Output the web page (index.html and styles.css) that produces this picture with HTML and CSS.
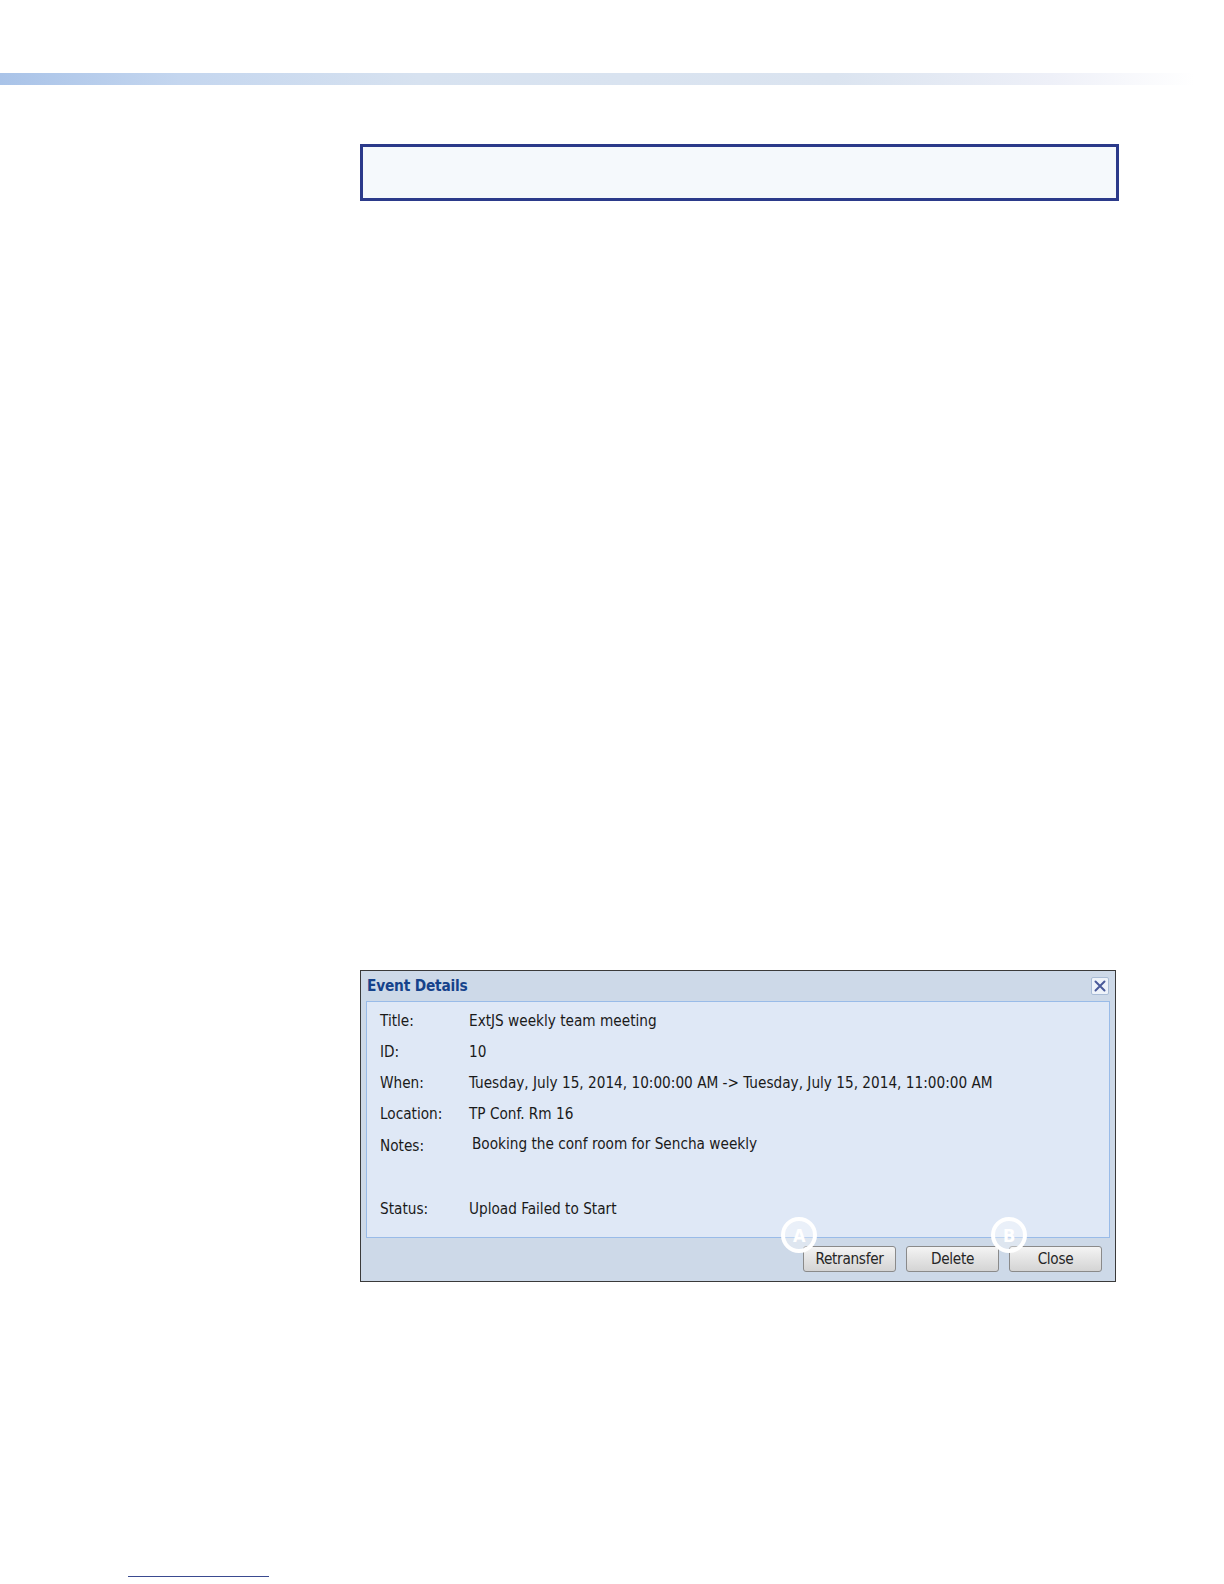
FILE: index.html
```html
<!DOCTYPE html>
<html>
<head>
<meta charset="utf-8">
<link rel="stylesheet" href="styles.css">
</head>
<body>
<div class="page">
<div class="topbar"></div>
<div class="content">
  <div class="notebox"></div>
  <div class="dialog">
    <div class="dlg-head">
      <span class="dlg-title">Event Details</span>
      <span class="dlg-close">
        <svg width="12" height="12" viewBox="0 0 12 12"><path d="M1.5 1.5 L10.5 10.5 M10.5 1.5 L1.5 10.5" stroke="#4a5a9a" stroke-width="2" stroke-linecap="round"/></svg>
      </span>
    </div>
    <div class="dlg-body">
      <div class="row"><span class="lbl">Title:</span><span class="val">ExtJS weekly team meeting</span></div>
      <div class="row r2"><span class="lbl">ID:</span><span class="val">10</span></div>
      <div class="row"><span class="lbl">When:</span><span class="val">Tuesday, July 15, 2014, 10:00:00 AM -&gt; Tuesday, July 15, 2014, 11:00:00 AM</span></div>
      <div class="row"><span class="lbl">Location:</span><span class="val">TP Conf. Rm 16</span></div>
      <div class="row notes"><span class="lbl low">Notes:</span><span class="val shift">Booking the conf room for Sencha weekly</span></div>
      <div class="row"><span class="lbl">Status:</span><span class="val">Upload Failed to Start</span></div>
    </div>
    <div class="dlg-foot">
      <span class="btn">Retransfer<span class="callout ca">A</span></span>
      <span class="btn">Delete</span>
      <span class="btn">Close<span class="callout cb">B</span></span>
    </div>
  </div>
  <div class="footline"></div>
</div>
</div>
</body>
</html>
```
FILE: styles.css
```css
html, body { margin: 0; padding: 0; background: #ffffff; }
body { font-family: "DejaVu Sans", sans-serif; }
.page { width: 1224px; height: 1584px; padding-top: 73px; box-sizing: border-box; overflow: hidden; }
.topbar {
  width: 1194px;
  height: 12px;
  background: linear-gradient(to right, #a9c3e8 0%, #c4d6ef 15%, #d7e2f0 35%, #dbe4f0 70%, #eef0f8 88%, #ffffff 100%);
}
.content { padding-left: 360px; }
.notebox {
  margin-top: 59px;
  width: 753px;
  height: 51px;
  border: 3px solid #2b3a8a;
  background: #f5f9fc;
}
.dialog {
  margin-top: 769px;
  width: 754px;
  height: 310px;
  border: 1px solid #3a3a3a;
  background: #cdd9e8;
  display: flex;
  flex-direction: column;
  font-family: "DejaVu Sans Condensed", "DejaVu Sans", sans-serif;
}
.dlg-head {
  height: 30px;
  flex: none;
  display: flex;
  align-items: center;
  justify-content: space-between;
  padding: 0 6px 0 6px;
}
.dlg-title { color: #15428b; font-weight: bold; font-size: 15.3px; letter-spacing: -0.2px; }
.dlg-close {
  width: 16px; height: 16px;
  border: 1px solid #a9bcd6;
  background: #eef3fa;
  border-radius: 2px;
  display: flex; align-items: center; justify-content: center;
}
.dlg-body {
  flex: none;
  margin: 0 5px 0 5px;
  height: 237px;
  border: 1px solid #99bbe8;
  background: #dfe8f6;
  padding: 4px 0 0 13px;
  box-sizing: border-box;
  display: flex;
  flex-direction: column;
}
.row { display: flex; height: 30.5px; line-height: 30px; font-size: 15.2px; color: #1a1a1a; }
.row.r2 { height: 31.5px; }
.row.notes { height: 65px; }
.lbl { width: 89px; }
.lbl.low { padding-top: 2px; }
.val.shift { padding-left: 3px; }
.dlg-foot {
  flex: 1;
  display: flex;
  justify-content: flex-end;
  align-items: flex-start;
  gap: 10px;
  padding: 8px 13px 0 0;
}
.btn {
  position: relative;
  width: 91px;
  height: 24px;
  border: 1px solid #8a8a8a;
  border-radius: 3px;
  background: linear-gradient(#f4f4f4, #e2e2e2 55%, #d4d4d4);
  display: flex; align-items: center; justify-content: center;
  font-size: 15.2px; color: #262626;
  letter-spacing: -0.3px;
}
.callout {
  position: absolute;
  width: 28px; height: 28px;
  border: 4px solid #ffffff;
  border-radius: 50%;
  background: rgba(255,255,255,0.35);
  color: #ffffff;
  font-weight: bold;
  font-size: 18px;
  display: flex; align-items: center; justify-content: center;
  top: -30px;
}
.ca { left: -23px; }
.cb { left: -19px; }
.footline {
  margin-top: 294px;
  margin-left: -232px;
  width: 141px;
  height: 1px;
  background: #3a4a90;
}
```
